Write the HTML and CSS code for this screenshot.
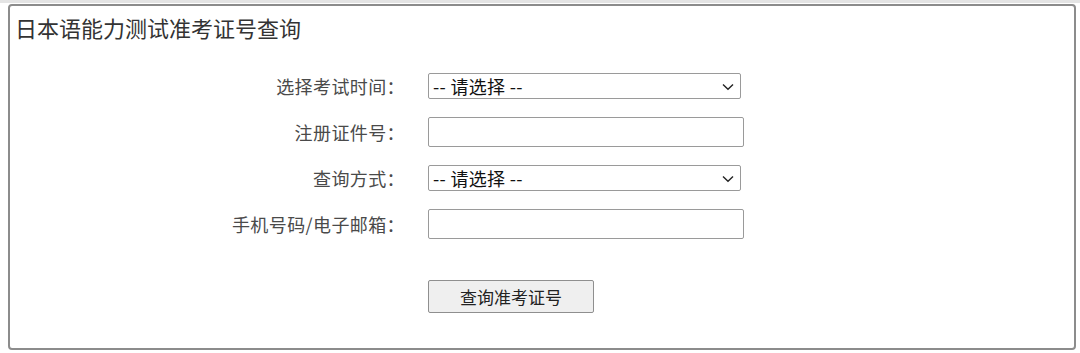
FILE: index.html
```html
<!DOCTYPE html>
<html lang="zh-CN">
<head>
<meta charset="utf-8">
<title>日本语能力测试准考证号查询</title>
<link rel="stylesheet" href="styles.css">
</head>
<body>
<div class="topband"></div>
<div class="panel">
  <h1 class="title">日本语能力测试准考证号查询</h1>
  <form class="form">
    <label class="label" for="exam">选择考试时间：</label>
    <div class="select-wrap">
      <select id="exam" class="select"><option>-- 请选择 --</option></select>
      <svg class="chev" width="12" height="8" viewBox="0 0 12 8"><path d="M1 1.5 L6 6.2 L11 1.5" fill="none" stroke="#222" stroke-width="1.4"/></svg>
    </div>
    <label class="label" for="reg">注册证件号：</label>
    <input id="reg" class="input" type="text">
    <label class="label" for="way">查询方式：</label>
    <div class="select-wrap">
      <select id="way" class="select"><option>-- 请选择 --</option></select>
      <svg class="chev" width="12" height="8" viewBox="0 0 12 8"><path d="M1 1.5 L6 6.2 L11 1.5" fill="none" stroke="#222" stroke-width="1.4"/></svg>
    </div>
    <label class="label" for="contact">手机号码/电子邮箱：</label>
    <input id="contact" class="input" type="text">
    <span class="label spacer"></span>
    <div class="actions"><button type="button" class="btn">查询准考证号</button></div>
  </form>
</div>
</body>
</html>
```
FILE: styles.css
```css
html, body {
  margin: 0;
  padding: 0;
  background: #ffffff;
}
body {
  width: 1080px;
  height: 353px;
  overflow: hidden;
  font-family: "Noto Sans CJK SC", "Noto Sans", sans-serif;
}
.topband {
  height: 3px;
  background: #e4e4e4;
}
.panel {
  box-sizing: border-box;
  margin: 1px 0 0 8px;
  width: 1068px;
  height: 346px;
  border: 2px solid #8c8c8c;
  border-radius: 4px;
  padding: 6px 6px 6px 5px;
}
.title {
  margin: 0;
  font-size: 22px;
  line-height: 30px;
  font-weight: 400;
  color: #333;
}
.form {
  margin-top: 31px;
  display: grid;
  grid-template-columns: 390px 320px;
  column-gap: 23px;
  row-gap: 18px;
  align-items: center;
}
.label {
  justify-self: end;
  font-size: 18px;
  letter-spacing: 0.4px;
  color: #4a4a4a;
  white-space: nowrap;
}
.select-wrap {
  position: relative;
  width: 313px;
  height: 26px;
}
.select {
  appearance: none;
  -webkit-appearance: none;
  box-sizing: border-box;
  width: 313px;
  height: 26px;
  margin: 0;
  padding: 0 0 0 4px;
  border: 1px solid #9a9a9a;
  border-radius: 2px;
  background: #fff;
  font-family: "Noto Sans CJK SC", "Noto Sans", sans-serif;
  font-size: 18px;
  letter-spacing: 0.3px;
  line-height: 24px;
  color: #111;
}
.chev {
  position: absolute;
  right: 7px;
  top: 10px;
  pointer-events: none;
}
.input {
  box-sizing: border-box;
  width: 316px;
  height: 30px;
  margin: 0;
  padding: 0 4px;
  border: 1px solid #9a9a9a;
  border-radius: 2px;
  background: #fff;
}
.actions {
  margin-top: 23px;
}
.spacer {
  margin-top: 23px;
}
.btn {
  box-sizing: border-box;
  width: 166px;
  height: 33px;
  margin: 0;
  border: 1px solid #8f8f8f;
  border-radius: 2px;
  background: #efefef;
  font-family: "Noto Sans CJK SC", "Noto Sans", sans-serif;
  font-size: 17px;
  color: #222;
  padding: 0;
}
```
